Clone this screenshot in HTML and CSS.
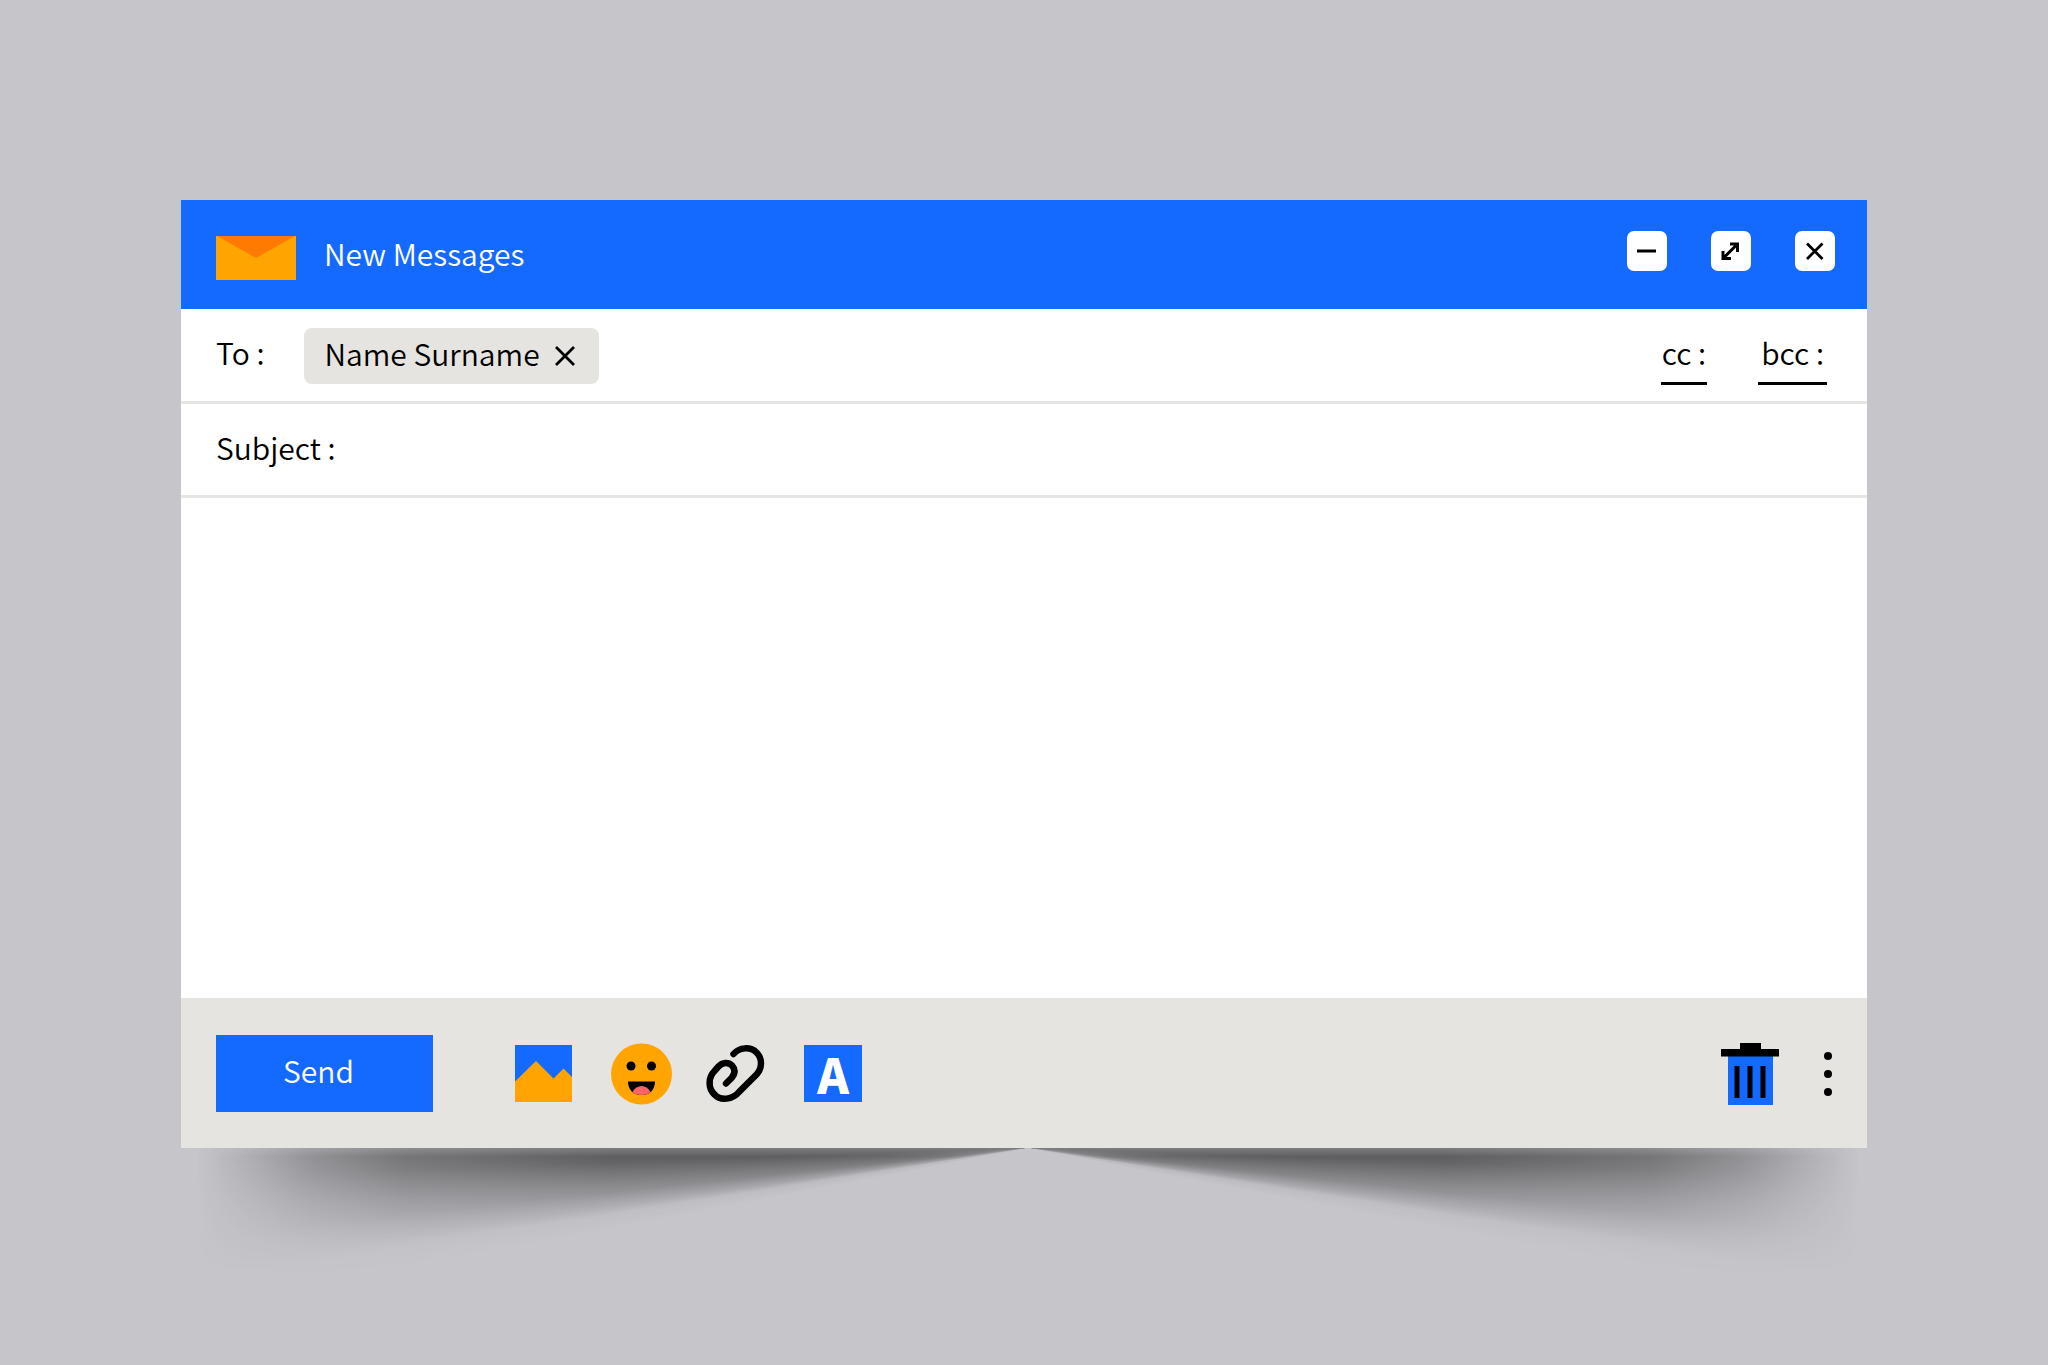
FILE: index.html
```html
<!DOCTYPE html>
<html lang="en">
<head>
  <meta charset="utf-8">
  <meta name="viewport" content="width=device-width, initial-scale=1">
  <title>New Messages</title>
  <link rel="stylesheet" href="styles.css">
</head>
<body>
  <main class="compose">
    <div class="shadow" aria-hidden="true">
      <div class="shadow-half shadow-left"></div>
      <div class="shadow-half shadow-right"></div>
    </div>
    <form class="window">
      <header class="titlebar">
        <svg class="envelope" viewBox="0 0 80 44" aria-hidden="true">
          <path fill="#ffa400" d="M0 0h80v44H0z"/>
          <path fill="#ff7a00" d="M1 0h78L40 22z"/>
        </svg>
        <h1 class="title">New Messages</h1>
        <div class="controls">
          <button class="control" type="button" aria-label="Minimize">
            <svg viewBox="0 0 40 40"><path d="M10 20h19" stroke="#000" stroke-width="3"/></svg>
          </button>
          <button class="control" type="button" aria-label="Expand">
            <svg viewBox="0 0 40 40"><path d="M12 27.500L26 13.500M19 13h7.500v8M12 20v7.500h8" fill="none" stroke="#000" stroke-width="3"/></svg>
          </button>
          <button class="control" type="button" aria-label="Close">
            <svg viewBox="0 0 40 40"><path d="M12 12.500l15.500 15.500M27.500 12.500L12 28" stroke="#000" stroke-width="2.800"/></svg>
          </button>
        </div>
      </header>
      <div class="row recipients">
        <span class="label">To :</span>
        <span class="chip">
          <span class="name">Name Surname</span>
          <button class="remove" type="button" aria-label="Remove Name Surname">
            <svg viewBox="0 0 20 20"><path d="M1 1l18 18M19 1L1 19" stroke="#000" stroke-width="2.800"/></svg>
          </button>
        </span>
        <nav class="copies">
          <a class="copy" href="#cc">cc :</a>
          <a class="copy copy-wide" href="#bcc">bcc :</a>
        </nav>
      </div>
      <div class="row subject-row">
        <label class="label" for="subject">Subject :</label>
        <input class="subject" id="subject" type="text">
      </div>
      <textarea class="message" aria-label="Message"></textarea>
      <footer class="toolbar">
        <button class="send" type="button">Send</button>
        <div class="tools">
          <button class="tool" type="button" aria-label="Insert picture">
            <svg viewBox="0 0 58 62"><path fill="#1469ff" d="M0 2h57v57H0z"/><path fill="#ffa400" d="M0 38.500L21 18l17.500 17.500L48.500 25.500l8.500 8.500V59H0z"/></svg>
          </button>
          <button class="tool tool-face" type="button" aria-label="Insert emoji">
            <svg viewBox="0 0 62 62">
              <circle cx="31.500" cy="31" r="30.500" fill="#ffa400"/>
              <circle cx="21" cy="23" r="4.500"/><circle cx="41.500" cy="23" r="4.500"/>
              <path d="M18 38.500h27c0 7-4 13.500-13.500 13.500S18 45.500 18 38.500z"/>
              <path fill="#ff6464" d="M22.500 49c4-8 14-8 18 0-2 2-5 3-9 3s-7-1-9-3z"/>
            </svg>
          </button>
          <button class="tool" type="button" aria-label="Attach file">
            <svg class="clip" viewBox="0 0 58 62"><path d="M24.500 11C30.500 4 41.500 3.500 47.500 9.500C53.500 15.500 53.500 25 47.500 31.500L30.500 48.500C23.500 57 11.500 58 5.500 51.500C-1.500 45 -0.500 34 5.500 28L9.500 23.500C13.500 19 19.500 19 23 22.500C26.500 26.500 26 31 22.500 35L17 40.500" fill="none" stroke="#000" stroke-width="6.500" stroke-linecap="round"/></svg>
          </button>
          <button class="tool tool-text" type="button" aria-label="Text format"><span class="letter">A</span></button>
        </div>
        <div class="extras">
          <button class="tool" type="button" aria-label="Delete">
            <svg viewBox="0 0 58 62"><path fill="#1469ff" d="M7 13h45v49H7z"/><path d="M19 0h21v6h18v7.500H0V6h19zM13.500 23h5v32h-5zM26.500 23h5v32h-5zM39.500 23h5v32h-5z"/></svg>
          </button>
          <button class="more" type="button" aria-label="More options">
            <svg viewBox="0 0 8 62"><circle cx="4" cy="13" r="4"/><circle cx="4" cy="31" r="4"/><circle cx="4" cy="49" r="4"/></svg>
          </button>
        </div>
      </footer>
    </form>
  </main>
</body>
</html>
```

FILE: styles.css
```css
* {
  box-sizing: border-box;
}

body {
  margin: 0;
  background: #c6c5ca;
  color: #000;
  font: 350 30px/44px "Noto Sans CJK SC", "Noto Sans", sans-serif;
}

button,
input,
textarea {
  margin: 0;
  padding: 0;
  border: 0;
  border-radius: 0;
  background: none;
  color: inherit;
  font: inherit;
  outline: 0;
}

button {
  cursor: pointer;
}

svg {
  display: block;
  width: 100%;
  height: 100%;
}

.compose {
  position: relative;
  display: flex;
  min-height: 100vh;
  padding: 200px 181px 217px;
}

.window {
  position: relative;
  display: flex;
  flex: 1;
  flex-direction: column;
  min-width: 0;
  background: #fff;
}

/* Header */

.titlebar {
  display: flex;
  align-items: center;
  height: 109px;
  padding: 0 32px 0 35px;
  background: #1469ff;
  color: #fff;
}

.envelope {
  width: 80px;
  height: 44px;
  margin-top: 6px;
}

.title {
  margin: 0 0 4px 28px;
  font-size: 30px;
  font-weight: 350;
}

.controls {
  display: flex;
  gap: 44px;
  margin: 0 0 8px auto;
}

.control {
  width: 40px;
  height: 40px;
  border-radius: 7px;
  background: #fff;
}

/* Address rows */

.row {
  display: flex;
  align-items: center;
  height: 95px;
  padding: 2px 40px 0 35px;
  border-bottom: 3px solid #e6e6e4;
}

.subject-row {
  height: 94px;
}

.label {
  padding-bottom: 8px;
  white-space: nowrap;
}

.chip {
  display: flex;
  align-items: center;
  gap: 15px;
  height: 56px;
  margin-left: 40px;
  padding: 0 24px 0 20px;
  border-radius: 8px;
  background: #e5e4e0;
  white-space: nowrap;
}

.name {
  padding-bottom: 6px;
}

.remove {
  width: 20px;
  height: 20px;
}

.copies {
  display: flex;
  gap: 51px;
  margin: 2px 0 0 auto;
}

.copy {
  padding: 0 1px 8px;
  border-bottom: 3px solid #000;
  color: #000;
  text-decoration: none;
  white-space: nowrap;
}

.copy-wide {
  padding: 0 3px 8px;
}

.subject {
  flex: 1;
  min-width: 0;
  margin-left: 16px;
}

.message {
  flex: 1;
  min-height: 200px;
  padding: 24px 35px;
  resize: none;
}

/* Footer */

.toolbar {
  display: flex;
  align-items: center;
  height: 150px;
  padding: 1px 35px 0;
  background: #e5e4e0;
}

.send {
  width: 217px;
  height: 77px;
  padding: 0 12px 8px 0;
  background: #1469ff;
  color: #fff;
}

.tools,
.extras {
  display: flex;
  align-items: center;
}

.tools {
  gap: 37px;
  margin-left: 82px;
}

.extras {
  gap: 45px;
  margin-left: auto;
}

.tool {
  width: 58px;
  height: 62px;
}

.tool-face {
  width: 62px;
}

.clip {
  overflow: visible;
}

.tool-text {
  height: 57px;
  background: #1469ff;
  color: #fff;
  font-size: 48px;
  font-weight: 900;
  line-height: 57px;
}

.letter {
  display: block;
  padding-bottom: 6px;
}

.more {
  width: 8px;
  height: 62px;
}

/* Curled-paper shadow under the window */

.shadow {
  position: absolute;
  right: 189px;
  bottom: 0;
  left: 197px;
  display: flex;
  height: 217px;
}

.shadow-half {
  flex: 1;
  mask-composite: intersect;
}

.shadow-left {
  background: conic-gradient(from 180deg at 100% 0, transparent 79deg, rgb(0 0 0 / 6%) 81deg, rgb(0 0 0 / 20%) 82deg, rgb(0 0 0 / 38%) 84deg, rgb(0 0 0 / 52%) 88deg);
  mask-image: linear-gradient(to bottom, rgb(0 0 0 / 70%) 0, #000 4%, rgb(0 0 0 / 60%) 25%, rgb(0 0 0 / 30%) 42%, transparent 65%), linear-gradient(to right, transparent 0, rgb(0 0 0 / 24%) 7%, rgb(0 0 0 / 50%) 14%, rgb(0 0 0 / 78%) 25%, #000 50%);
}

.shadow-right {
  background: conic-gradient(from 90deg at 0 0, rgb(0 0 0 / 52%) 2deg, rgb(0 0 0 / 38%) 6deg, rgb(0 0 0 / 20%) 8deg, rgb(0 0 0 / 6%) 9deg, transparent 11deg, transparent 359deg, rgb(0 0 0 / 52%) 360deg);
  mask-image: linear-gradient(to bottom, rgb(0 0 0 / 70%) 0, #000 4%, rgb(0 0 0 / 60%) 25%, rgb(0 0 0 / 30%) 42%, transparent 65%), linear-gradient(to left, transparent 0, rgb(0 0 0 / 24%) 7%, rgb(0 0 0 / 50%) 14%, rgb(0 0 0 / 78%) 25%, #000 50%);
}
```
